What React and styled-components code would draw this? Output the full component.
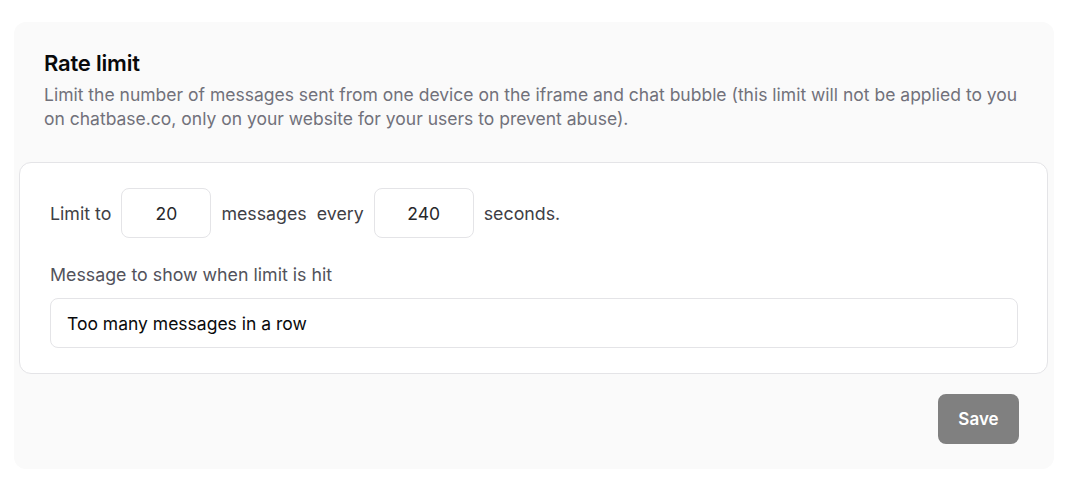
import React from 'react';
import styled, { createGlobalStyle } from 'styled-components';

const Global = createGlobalStyle`
  body { margin: 0; background: #ffffff; font-family: Inter, "Noto Sans", sans-serif; }
  * { box-sizing: border-box; }
`;

const Page = styled.div` padding: 22px 16px 19px 14px; `;

const Card = styled.section`
  background: #fafafa; border-radius: 12px; padding: 0 0 25px;
  display: flex; flex-direction: column;
`;

const Header = styled.div` padding: 27px 30px 31px; `;

const Title = styled.h2`
  margin: 0 0 6px; font-size: 22px; font-weight: 600; line-height: 28px; color: #09090b;
  letter-spacing: -0.2px;
`;

const Description = styled.p`
  margin: 0; font-size: 17.5px; line-height: 24px; color: #71717a;
`;

const Panel = styled.div`
  margin: 0 6px 0 5px; background: #ffffff; border: 1px solid #e4e4e7; border-radius: 12px;
  padding: 25px 29px 25px 30px; display: flex; flex-direction: column;
`;

const Row = styled.div`
  display: flex; align-items: center; gap: 10px; font-size: 17.8px; color: #3f3f46;
`;

const NumberBox = styled.input`
  width: ${({ $w }) => $w}px; height: 50px; border: 1px solid #e4e4e7; border-radius: 8px;
  background: #fff; text-align: center; font: inherit; font-size: 17.5px; color: #27272a;
  outline: none;
`;

const Label = styled.label`
  display: block; margin: 26px 0 12px; font-size: 17.8px; line-height: 22px; color: #52525b;
`;

const TextBox = styled.input`
  width: 100%; height: 50px; border: 1px solid #e4e4e7; border-radius: 8px; background: #fff;
  padding: 0 16px; font-family: inherit; font-size: 17.5px; color: #09090b; outline: none;
`;

const Footer = styled.div`
  display: flex; justify-content: flex-end; padding: 20px 35px 0;
`;

const SaveButton = styled.button`
  width: 81px; height: 50px; border: none; border-radius: 8px; background: #808080;
  color: #ffffff; font-family: inherit; font-size: 17px; font-weight: 600; cursor: default;
`;

export default function App() {
  return (
    <Page>
      <Global />
      <Card>
        <Header>
          <Title>Rate limit</Title>
          <Description>
            Limit the number of messages sent from one device on the iframe and chat bubble (this limit will not be applied to you on chatbase.co, only on your website for your users to prevent abuse).
          </Description>
        </Header>
        <Panel>
          <Row>
            <span>Limit to</span>
            <NumberBox $w={90} defaultValue="20" />
            <span>messages</span>
            <span>every</span>
            <NumberBox $w={100} defaultValue="240" />
            <span>seconds.</span>
          </Row>
          <Label>Message to show when limit is hit</Label>
          <TextBox defaultValue="Too many messages in a row" />
        </Panel>
        <Footer>
          <SaveButton>Save</SaveButton>
        </Footer>
      </Card>
    </Page>
  );
}
